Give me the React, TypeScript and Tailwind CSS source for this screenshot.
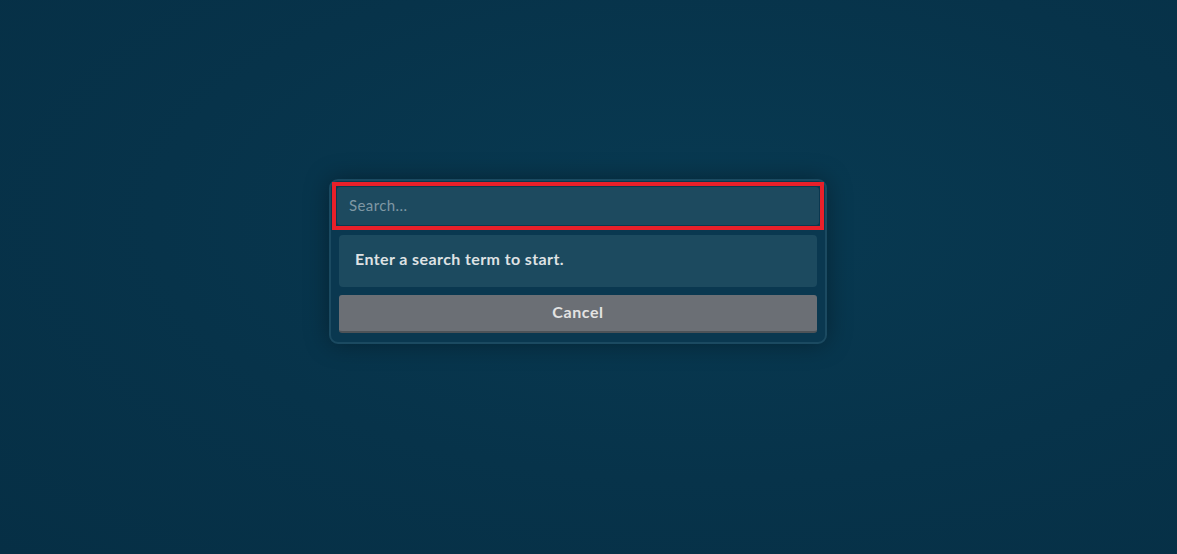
import React from "react";

export default function App() {
  return (
    <div
      className="w-full h-[554px] bg-[radial-gradient(ellipse_at_60%_40%,#083a52_0%,#07334a_55%,#062f45_100%)] flex items-start justify-start pl-[329px] pt-[179px]"
      style={{ fontFamily: "Lato, 'Noto Sans', sans-serif" }}
    >
      <div className="w-[498px] rounded-[9px] border-2 border-[#1b4a61] bg-[#0a3850] shadow-[0_0_24px_rgba(0,0,0,0.35)] p-[1px] flex flex-col">
        <div className="border-4 border-[#e8202a] p-[1px]">
          <input
            placeholder="Search..."
            className="w-full h-[38px] rounded-[3px] bg-[#1d4a5f] pl-[12px] pb-[2px] text-[15px] tracking-[0.4px] text-[#e0e0e0] placeholder:text-[#7f98a4] outline-none"
          />
        </div>
        <div className="px-[7px] pt-[5px] pb-[8px] flex flex-col gap-[8px]">
          <div className="h-[52px] rounded-[4px] bg-[#1c4a5f] flex items-center px-[16px] pb-[5px] text-[16px] font-bold text-[#dfe2e4] tracking-[0.4px]">
            Enter a search term to start.
          </div>
          <button className="h-[38px] rounded-[3px] bg-[#6b6f75] border-b-2 border-[#4e5358] pb-[3px] text-[16px] font-bold tracking-[0.6px] text-[#e3e3e3]">
            Cancel
          </button>
        </div>
      </div>
    </div>
  );
}
